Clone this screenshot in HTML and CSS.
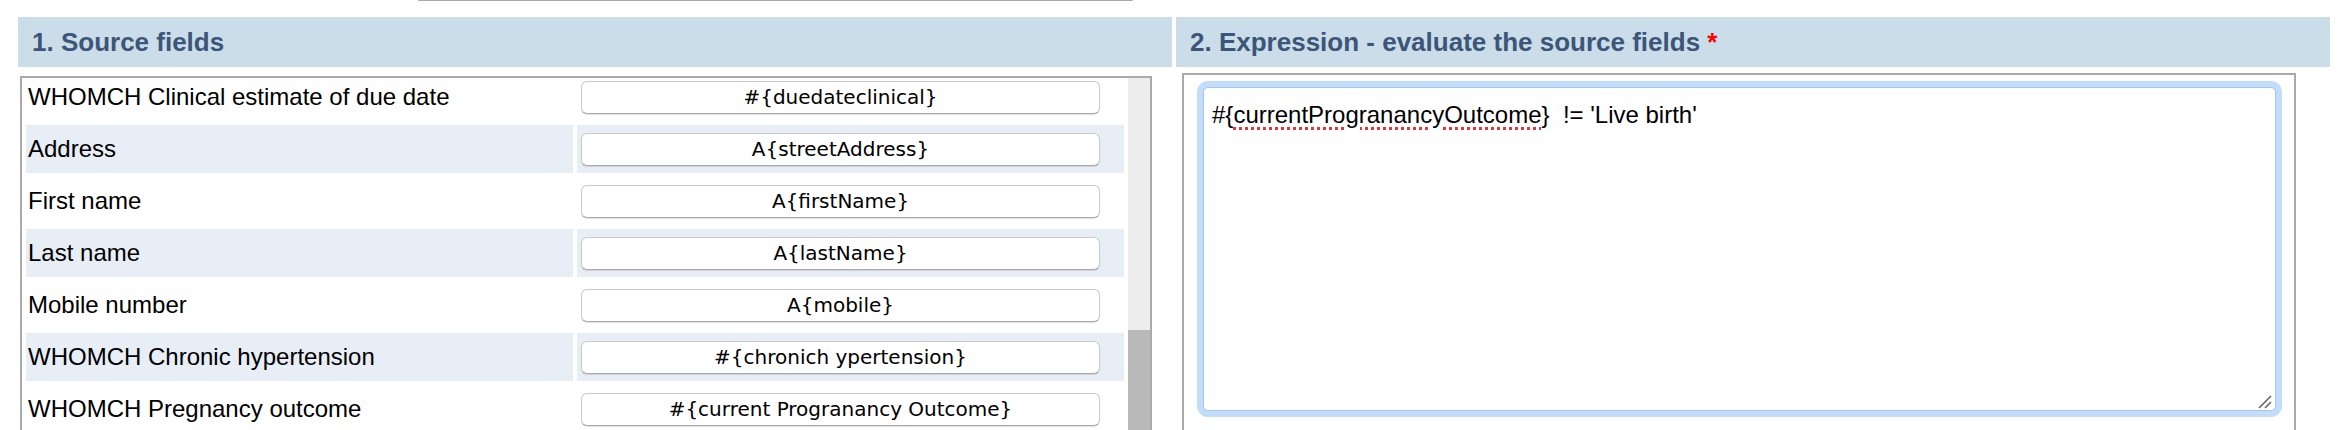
FILE: index.html
```html
<!DOCTYPE html>
<html lang="en">
<head>
<meta charset="utf-8">
<title>Calculated field</title>
<link rel="stylesheet" href="styles.css">
</head>
<body>
<div class="topbar"></div>
<div class="columns">
  <section class="panel">
    <h2 class="panel-title">1. Source fields</h2>
    <div class="source-box">
      <div class="source-list">
        <table class="fields">
          <tr><td class="label">WHOMCH Clinical estimate of due date</td><td class="value"><input type="text" readonly value="#{duedateclinical}"></td></tr>
          <tr class="alt"><td class="label">Address</td><td class="value"><input type="text" readonly value="A{streetAddress}"></td></tr>
          <tr><td class="label">First name</td><td class="value"><input type="text" readonly value="A{firstName}"></td></tr>
          <tr class="alt"><td class="label">Last name</td><td class="value"><input type="text" readonly value="A{lastName}"></td></tr>
          <tr><td class="label">Mobile number</td><td class="value"><input type="text" readonly value="A{mobile}"></td></tr>
          <tr class="alt"><td class="label">WHOMCH Chronic hypertension</td><td class="value"><input type="text" readonly value="#{chronich ypertension}"></td></tr>
          <tr><td class="label">WHOMCH Pregnancy outcome</td><td class="value"><input type="text" readonly value="#{current Progranancy Outcome}"></td></tr>
        </table>
      </div>
      <div class="scrollbar"><div class="thumb"></div></div>
    </div>
  </section>
  <section class="panel">
    <h2 class="panel-title">2. Expression - evaluate the source fields <span class="req">*</span></h2>
    <div class="expr-box">
      <div class="expr-input" role="textbox">#{<span class="misspelt">currentProgranancyOutcome</span>}  != 'Live birth'<svg class="grip" width="14" height="14" viewBox="0 0 14 14"><line x1="13" y1="1" x2="1" y2="13"/><line x1="13" y1="7" x2="7" y2="13"/></svg></div>
    </div>
  </section>
</div>
</body>
</html>
```

FILE: styles.css
```css
html, body {
  margin: 0;
  padding: 0;
  overflow: hidden;
  background: #ffffff;
}

body {
  font-family: "Liberation Sans", Arial, sans-serif;
  color: #000;
}

.topbar {
  margin-left: 418px;
  width: 715px;
  height: 1px;
  background: #a9a9a9;
  border-radius: 0 0 2px 2px;
}

.columns {
  display: flex;
  gap: 4px;
  margin: 16px 10px 0 18px;
}

.panel {
  flex: 1 1 0;
  min-width: 0;
}

.panel-title {
  margin: 0;
  height: 50px;
  display: flex;
  align-items: center;
  padding-left: 14px;
  background: #cbdde8;
  color: #3c5679;
  font-size: 26px;
  font-weight: bold;
  white-space: pre;
}

.req {
  color: #ff0000;
}

.source-box {
  margin: 9px 20px 0 2px;
  border: 2px solid #aaaaaa;
  height: 380px;
  display: flex;
}

.source-list {
  flex: 1 1 auto;
  min-width: 0;
  overflow: hidden;
}

.fields {
  width: 100%;
  table-layout: fixed;
  border-spacing: 4px;
  margin-top: -9px;
}

.fields td {
  height: 48px;
  padding: 0;
  vertical-align: middle;
}

.fields .alt td {
  background: #e8eef6;
}

.label {
  padding-left: 2px !important;
  font-size: 24px;
  white-space: nowrap;
}

.value input {
  display: block;
  box-sizing: border-box;
  width: 519px;
  height: 33px;
  margin: 0 0 0 4px;
  padding: 0;
  border: 1px solid #cacaca;
  border-bottom-color: #a9a9a9;
  border-radius: 6px;
  box-shadow: 0 1px 1px rgba(0, 0, 0, 0.12);
  background: #ffffff;
  font-family: "DejaVu Sans", sans-serif;
  font-size: 20px;
  color: #000;
  text-align: center;
  outline: none;
}

.scrollbar {
  width: 22px;
  flex: 0 0 22px;
  background: #ededed;
  display: flex;
  flex-direction: column;
  padding-top: 252px;
  box-sizing: border-box;
}

.thumb {
  flex: 1 1 auto;
  background: #b9b9b9;
}

.expr-box {
  margin: 6px 34px 0 6px;
  border: 2px solid #aaaaaa;
  height: 380px;
  padding: 12px 18px 0 19px;
}

.expr-input {
  position: relative;
  box-sizing: border-box;
  height: 324px;
  border: 1px solid #a9c4e4;
  border-radius: 5px;
  box-shadow: 0 0 0 6px #c1ddfa;
  padding: 13px 8px;
  font-size: 24px;
  white-space: pre-wrap;
  color: #000;
  background: #fff;
}

.misspelt {
  text-decoration: underline dotted #e8353a;
  text-decoration-thickness: 3px;
  text-underline-offset: 4px;
}

.grip {
  position: absolute;
  right: 3px;
  bottom: 1px;
  stroke: #666666;
  stroke-width: 1.6;
}
```
